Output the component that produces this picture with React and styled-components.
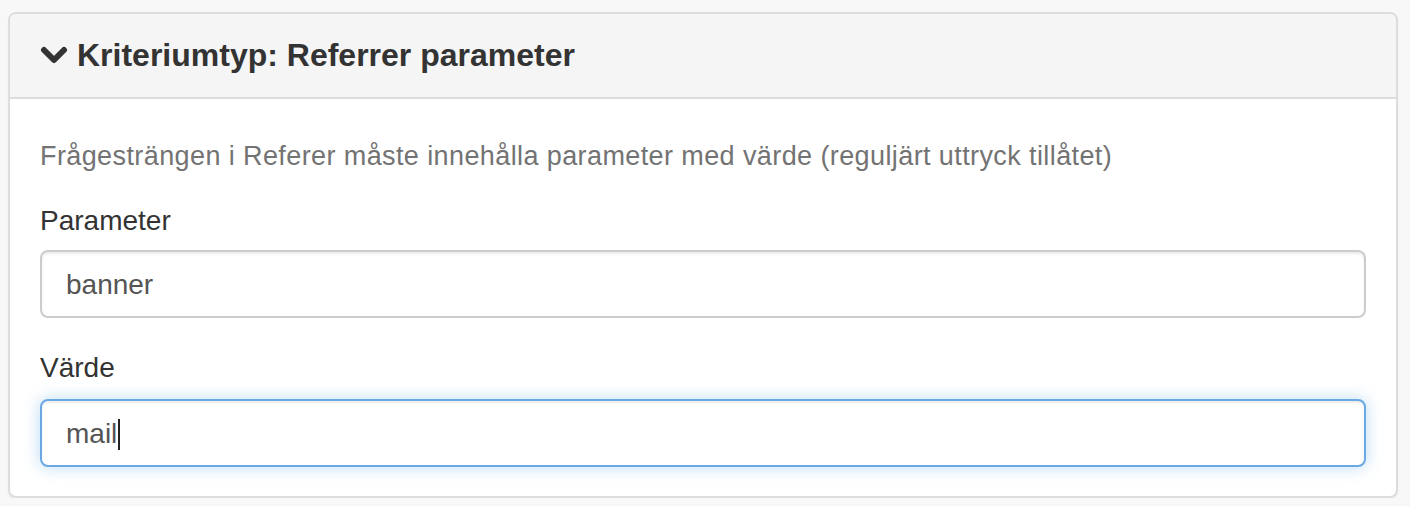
import React from "react";
import styled, { createGlobalStyle, css } from "styled-components";

const GlobalStyle = createGlobalStyle`
  html, body {
    margin: 0;
    padding: 0;
    background: #f8f8f8;
    font-family: "Liberation Sans", Arial, Helvetica, sans-serif;
  }
`;

const Page = styled.div`
  padding: 12px 12px 0 8px;
`;

const Panel = styled.section`
  background: #fff;
  border: 2px solid #dddddd;
  border-radius: 8px;
  box-shadow: 0 2px 2px rgba(0, 0, 0, 0.05);
  overflow: hidden;
`;

const Heading = styled.header`
  display: flex;
  align-items: center;
  gap: 9px;
  background: #f5f5f5;
  border-bottom: 2px solid #dddddd;
  padding: 21px 30px 22px 30px;
`;

const Title = styled.h3`
  margin: 0;
  font-size: 32px;
  line-height: 40px;
  font-weight: 700;
  color: #333333;
`;

const Chevron = styled.svg`
  width: 28px;
  height: 20px;
  flex: none;
  margin-top: 1px;
`;

const Body = styled.div`
  padding: 40px 30px 29px 30px;
`;

const Help = styled.p`
  margin: 0 0 28px 0;
  font-size: 27px;
  line-height: 34px;
  letter-spacing: 0.4px;
  color: #737373;
`;

const Group = styled.div`
  display: flex;
  flex-direction: column;
  gap: ${(p) => p.$gap}px;
  & + & {
    margin-top: 30px;
  }
`;

const Label = styled.label`
  font-size: 28px;
  line-height: 40px;
  color: #333333;
`;

const Field = styled.div`
  box-sizing: border-box;
  height: 68px;
  padding: 2px 24px 0 24px;
  display: flex;
  align-items: center;
  font-size: 28px;
  color: #555555;
  background: #fff;
  border: 2px solid #cccccc;
  border-radius: 8px;
  box-shadow: inset 0 2px 2px rgba(0, 0, 0, 0.075);
  ${(p) =>
    p.$focused &&
    css`
      border-color: #6aa9e3;
      box-shadow: inset 0 2px 2px rgba(0, 0, 0, 0.075),
        0 0 16px rgba(102, 175, 233, 0.45);
    `}
`;

const Caret = styled.span`
  display: inline-block;
  width: 2px;
  height: 31px;
  background: #222;
  margin-left: 1px;
`;

export default function App() {
  return (
    <>
      <GlobalStyle />
      <Page>
        <Panel>
          <Heading>
            <Chevron viewBox="0 0 28 20" aria-hidden="true">
              <polyline
                points="4,4 14,14 24,4"
                fill="none"
                stroke="#333"
                strokeWidth="6"
                strokeLinecap="round"
                strokeLinejoin="round"
              />
            </Chevron>
            <Title>Kriteriumtyp: Referrer parameter</Title>
          </Heading>
          <Body>
            <Help>
              Frågesträngen i Referer måste innehålla parameter med värde
              (reguljärt uttryck tillåtet)
            </Help>
            <Group $gap={9}>
              <Label>Parameter</Label>
              <Field>banner</Field>
            </Group>
            <Group $gap={11}>
              <Label>Värde</Label>
              <Field $focused>
                mail
                <Caret />
              </Field>
            </Group>
          </Body>
        </Panel>
      </Page>
    </>
  );
}
